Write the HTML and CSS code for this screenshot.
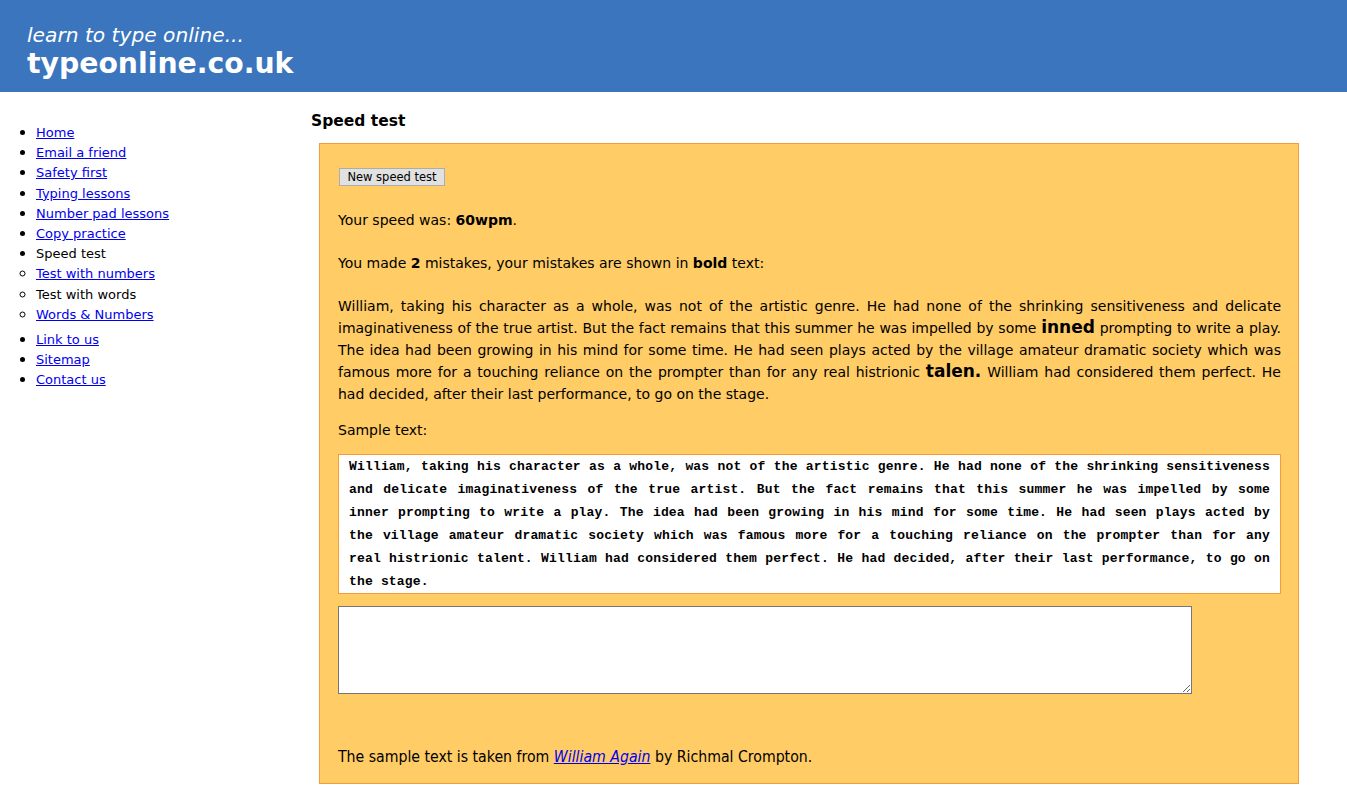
FILE: index.html
```html
<!DOCTYPE html>
<html lang="en">
<head>
<meta charset="utf-8">
<title>Speed test - typeonline.co.uk</title>
<link rel="stylesheet" href="styles.css">
</head>
<body>
<header class="masthead">
  <div class="tagline">learn to type online...</div>
  <div class="sitename">typeonline.co.uk</div>
</header>
<div class="page">
  <nav class="sidebar">
    <ul class="menu">
      <li><a href="#">Home</a></li>
      <li><a href="#">Email a friend</a></li>
      <li><a href="#">Safety first</a></li>
      <li><a href="#">Typing lessons</a></li>
      <li><a href="#">Number pad lessons</a></li>
      <li><a href="#">Copy practice</a></li>
      <li>Speed test</li>
    </ul>
    <ul class="menu sub">
      <li><a href="#">Test with numbers</a></li>
      <li>Test with words</li>
      <li><a href="#">Words &amp; Numbers</a></li>
    </ul>
    <ul class="menu extra">
      <li><a href="#">Link to us</a></li>
      <li><a href="#">Sitemap</a></li>
      <li><a href="#">Contact us</a></li>
    </ul>
  </nav>
  <main class="content">
    <h1 class="title">Speed test</h1>
    <section class="panel">
      <div class="btnrow"><button class="btn" type="button">New speed test</button></div>
      <p class="line">Your speed was: <b>60wpm</b>.</p>
      <p class="line">You made <b>2</b> mistakes, your mistakes are shown in <b>bold</b> text:</p>
      <p class="result">William, taking his character as a whole, was not of the artistic genre. He had none of the shrinking sensitiveness and delicate imaginativeness of the true artist. But the fact remains that this summer he was impelled by some <b class="err">inned</b> prompting to write a play. The idea had been growing in his mind for some time. He had seen plays acted by the village amateur dramatic society which was famous more for a touching reliance on the prompter than for any real histrionic <b class="err">talen.</b> William had considered them perfect. He had decided, after their last performance, to go on the stage.</p>
      <p class="label">Sample text:</p>
      <div class="sample">William, taking his character as a whole, was not of the artistic genre. He had none of the shrinking sensitiveness and delicate imaginativeness of the true artist. But the fact remains that this summer he was impelled by some inner prompting to write a play. The idea had been growing in his mind for some time. He had seen plays acted by the village amateur dramatic society which was famous more for a touching reliance on the prompter than for any real histrionic talent. William had considered them perfect. He had decided, after their last performance, to go on the stage.</div>
      <textarea class="entry"></textarea>
      <p class="credit">The sample text is taken from <a href="#"><i>William Again</i></a> by Richmal Crompton.</p>
    </section>
  </main>
</div>
</body>
</html>
```
FILE: styles.css
```css
html, body {
  margin: 0;
  padding: 0;
  background: #fff;
  color: #000;
  font-family: "DejaVu Sans", Verdana, sans-serif;
  font-size: 13px;
}

a { color: #0000ee; }

.masthead {
  background: #3a75bd;
  color: #fff;
  height: 92px;
  box-sizing: border-box;
  padding: 22px 0 0 27px;
}
.tagline {
  font-style: italic;
  font-size: 20.2px;
  line-height: 26px;
}
.sitename {
  font-weight: bold;
  font-size: 28.3px;
  line-height: 32px;
}

.page {
  display: flex;
  align-items: flex-start;
}

.sidebar {
  width: 311px;
  flex: none;
  padding-top: 30px;
}
.menu {
  margin: 0;
  padding: 0 0 0 36px;
  list-style: disc;
  line-height: 20.2px;
}
.menu li {
  height: 20.2px;
  overflow: visible;
}
.menu li::marker { font-size: 15px; }
.menu.sub { list-style: circle; }
.menu.extra { margin-top: 5px; }

.content {
  flex: none;
  width: 990px;
}
.title {
  font-size: 15.5px;
  font-weight: bold;
  margin: 0;
  padding-top: 18px;
  line-height: 22px;
  height: 33px;
}
.panel {
  margin-left: 8px;
  width: 980px;
  box-sizing: border-box;
  height: 641px;
  background: #ffcc66;
  border: 1px solid #f39c38;
  padding: 24px 17px 0 18px;
}
.btnrow {
  padding-left: 1px;
  height: 18px;
  margin-bottom: 23px;
}
.btn {
  font-family: "DejaVu Sans", Verdana, sans-serif;
  font-size: 11.5px;
  height: 18px;
  width: 106px;
  padding: 0;
  line-height: 16px;
  background: #e1e1e1;
  border: 1px solid #adadad;
  border-radius: 0;
  color: #000;
}
.line {
  margin: 0 0 21px;
  line-height: 22px;
  font-size: 14px;
}
.result {
  margin: 0 0 14px;
  line-height: 22px;
  font-size: 14px;
  text-align: justify;
}
.err {
  font-size: 17px;
  line-height: 19px;
}
.label {
  margin: 0 0 13px;
  line-height: 22px;
  font-size: 14px;
}
.sample {
  background: #fff;
  border: 1px solid #f39c38;
  padding: 0 10px;
  font-family: "Liberation Mono", "Courier New", monospace;
  font-weight: bold;
  font-size: 13px;
  letter-spacing: 0.17px;
  line-height: 23px;
  text-align: justify;
  margin-bottom: 12px;
}
.entry {
  display: block;
  width: 854px;
  height: 88px;
  box-sizing: border-box;
  margin: 0 0 52px;
  border: 1px solid #767676;
  background: #fff;
  padding: 2px;
}
.credit {
  margin: 0;
  font-family: "DejaVu Sans Condensed", "DejaVu Sans", sans-serif;
  font-stretch: condensed;
  font-size: 15.7px;
  line-height: 22px;
}
```
